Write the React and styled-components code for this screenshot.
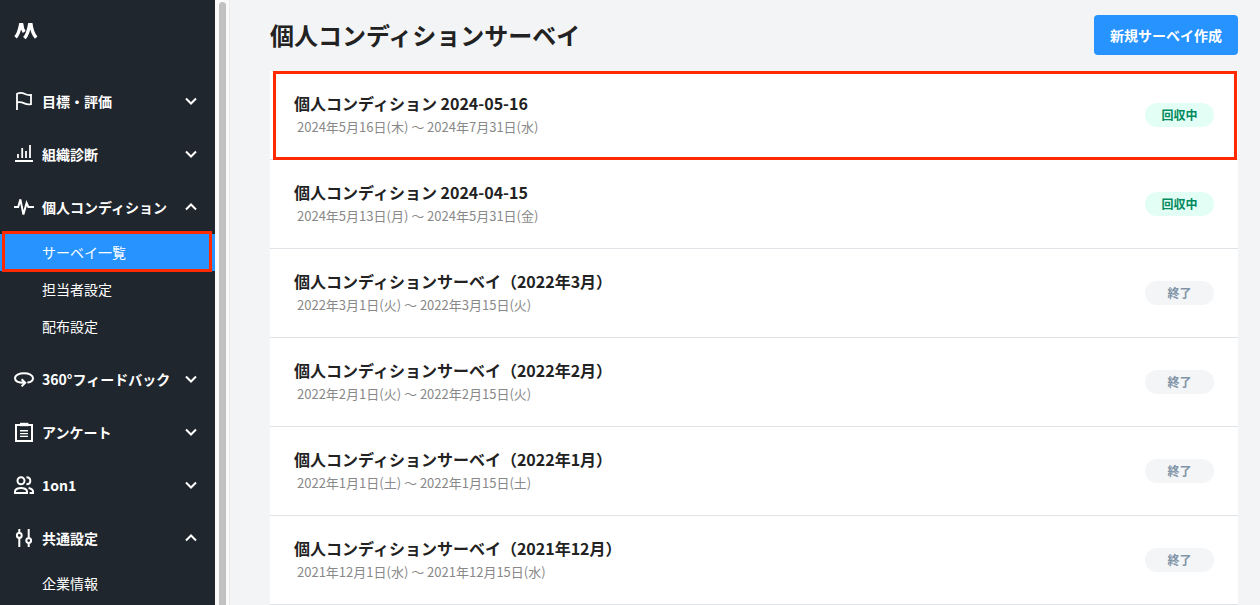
import React, { useState } from 'react';
import styled, { createGlobalStyle, css } from 'styled-components';

const colors = {
  sidebar: '#20262d',
  primary: '#2693ff',
  background: '#f3f4f6',
  border: '#e0e4e8',
  text: '#222222',
  textLight: '#888888',
  highlight: '#ff2a00',
};

const GlobalStyle = createGlobalStyle`
  * {
    box-sizing: border-box;
  }

  body {
    margin: 0;
    background: ${colors.background};
    color: ${colors.text};
    font-family: "Noto Sans CJK JP", "Noto Sans", sans-serif;
  }

  button {
    border: 0;
    font-family: inherit;
    cursor: pointer;
  }
`;

const Layout = styled.div`
  display: flex;
  height: 100vh;
  overflow: hidden;
`;

const Sidebar = styled.aside`
  flex: 0 0 215px;
  background: ${colors.sidebar};
  color: #fff;
  overflow: hidden;
`;

const LogoLink = styled.a`
  display: block;
  height: 75px;
  padding: 22px 14px;
  color: inherit;

  svg {
    display: block;
  }
`;

const Group = styled.div`
  padding-bottom: ${({ $open }) => ($open ? '8px' : '0')};
`;

const GroupButton = styled.button`
  display: flex;
  align-items: center;
  gap: 8px;
  width: 100%;
  height: 53px;
  padding: 0 18px 1px 14px;
  background: none;
  color: inherit;
  font-size: 14px;
  line-height: 20px;
  font-weight: 700;
  text-align: left;
`;

const GroupLabel = styled.span`
  flex: 1;
  white-space: nowrap;
`;

const highlighted = css`
  position: relative;

  &::after {
    content: '';
    position: absolute;
    inset: ${({ $inset }) => $inset};
    border: 3px solid ${colors.highlight};
    pointer-events: none;
    z-index: 1;
  }
`;

const SubLink = styled.a`
  display: block;
  padding-left: 42px;
  font-size: 14px;
  line-height: 37px;
  color: inherit;
  text-decoration: none;
  background: ${({ $active }) => ($active ? colors.primary : 'transparent')};
  ${({ $inset }) => $inset && highlighted}
`;

const ScrollTrack = styled.div`
  flex: 0 0 15px;
  padding: 2px 3px 0 4px;
  background: #fafafa;
  border-right: 1px solid #ebebeb;
`;

const ScrollThumb = styled.div`
  height: 110%;
  border-radius: 4px;
  background: #c1c1c1;
`;

const Main = styled.main`
  flex: 1;
  min-width: 0;
  padding: 15px 22px 0 40px;
`;

const PageHeader = styled.header`
  display: flex;
  justify-content: space-between;
  align-items: center;
  margin-bottom: 16px;
`;

const PageTitle = styled.h1`
  margin: 0;
  font-size: 24px;
  line-height: 40px;
  font-weight: 700;
`;

const CreateButton = styled.button`
  height: 40px;
  padding: 0 16px;
  border-radius: 4px;
  background: ${colors.primary};
  color: #fff;
  font-size: 14px;
  font-weight: 700;
`;

const SurveyList = styled.ul`
  margin: 0;
  padding: 0;
  list-style: none;
  background: #fff;
`;

const SurveyRow = styled.li`
  display: flex;
  justify-content: space-between;
  align-items: center;
  padding: 20px 24px;
  border-bottom: 1px solid ${colors.border};
  ${({ $inset }) => $inset && highlighted}
`;

const SurveyTitle = styled.h2`
  margin: 0;
  font-size: 16px;
  line-height: 24px;
  font-weight: 700;
`;

const SurveyPeriod = styled.p`
  margin: 0;
  padding-left: 3px;
  font-size: 13px;
  line-height: 24px;
  color: ${colors.textLight};
`;

const Badge = styled.span`
  min-width: 69px;
  border-radius: 12px;
  font-size: 12px;
  line-height: 24px;
  font-weight: 700;
  text-align: center;
  background: ${({ $open }) => ($open ? '#e3fff5' : '#f3f5f7')};
  color: ${({ $open }) => ($open ? '#048a5f' : '#8194a7')};
`;

const Icon = ({ children }) => (
  <svg width="20" height="20" viewBox="0 0 20 20" fill="none" stroke="currentColor" strokeWidth="2" aria-hidden="true">
    {children}
  </svg>
);

const Chevron = ({ up }) => (
  <svg width="12" height="12" viewBox="0 0 12 12" fill="none" stroke="currentColor" strokeWidth="2" aria-hidden="true">
    <path d={up ? 'M1 8.5l5-5 5 5' : 'M1 3.5l5 5 5-5'} />
  </svg>
);

const Logo = () => (
  <svg width="24" height="18" viewBox="0 0 24 18" fill="none" stroke="currentColor" strokeWidth="3.4" aria-hidden="true">
    <path d="M1.6 15.4C4.4 12.4 5.4 9 6.8 1.8M7.4 1.2C7.8 4.8 8.4 7.2 10.2 10M10.4 16.2C13.4 13 14.6 9.4 15.8 1.6M16.6 1.2C17.6 7.4 19 12.2 22.2 15.6" />
    <path d="M5.2 1H9l.4 4H5zM14.4 1h3.8l.4 4H14z" fill="currentColor" stroke="none" />
  </svg>
);

const icons = {
  flag: <path d="M3 19V2.8C6 1.4 8 1.6 10.4 2.8S14.6 4.4 17 4v9.2c-2.6.6-4.6.2-6.6-.8S6 10.4 3 11.4" strokeWidth="1.8" />,
  bars: <path d="M1 17h18M4 14v-4M8.2 14V4M12 14V7M16 14V1" strokeWidth="1.8" />,
  pulse: <path d="M0 10h4.2L6.4 2.4l3 15.2L12.6 6l1.8 4H20" />,
  rotate: <path d="M13.4 13.6C17 13 19 11.4 19 9.2 19 6.2 15 4.3 10 4.3S1 6.2 1 9.2c0 2.8 3.6 4.6 9.6 4.6M7.6 10.2l3.6 3.6-3.6 3.6" />,
  clipboard: (
    <>
      <path d="M2 3h16v16H2z" />
      <path d="M6 .8h8.4v3.4H6z" fill="currentColor" stroke="none" />
      <path d="M6 8.8H14M6 11.6H14M6 14.4H14" strokeWidth="1.4" />
    </>
  ),
  users: (
    <>
      <circle cx="7" cy="5.8" r="3.5" />
      <path d="M12.4 2.3c2.6 0 3.9 1.6 3.9 3.5s-1.3 3.5-3.9 3.5" />
      <path d="M1 18v-1.6c0-2.4 3.6-3.5 6-3.5s6 1.1 6 3.5V18zM14.6 12.9c3 .6 4.4 1.8 4.4 3.5V18h-3.4" />
    </>
  ),
  sliders: (
    <>
      <circle cx="5.3" cy="7.4" r="2.4" />
      <circle cx="14.7" cy="12.6" r="2.4" />
      <path d="M5.3 1v4M5.3 9.8V19M14.7 1v9.2M14.7 15v4" />
    </>
  ),
};

const navGroups = [
  { icon: 'flag', label: '目標・評価' },
  { icon: 'bars', label: '組織診断' },
  { icon: 'pulse', label: '個人コンディション', children: ['サーベイ一覧', '担当者設定', '配布設定'] },
  { icon: 'rotate', label: '360°フィードバック' },
  { icon: 'clipboard', label: 'アンケート' },
  { icon: 'users', label: '1on1' },
  { icon: 'sliders', label: '共通設定', children: ['企業情報'] },
];

const surveys = [
  { title: '個人コンディション 2024-05-16', period: '2024年5月16日(木) 〜 2024年7月31日(水)', open: true },
  { title: '個人コンディション 2024-04-15', period: '2024年5月13日(月) 〜 2024年5月31日(金)', open: true },
  { title: '個人コンディションサーベイ（2022年3月）', period: '2022年3月1日(火) 〜 2022年3月15日(火)' },
  { title: '個人コンディションサーベイ（2022年2月）', period: '2022年2月1日(火) 〜 2022年2月15日(火)' },
  { title: '個人コンディションサーベイ（2022年1月）', period: '2022年1月1日(土) 〜 2022年1月15日(土)' },
  { title: '個人コンディションサーベイ（2021年12月）', period: '2021年12月1日(水) 〜 2021年12月15日(水)' },
];

const NavGroup = ({ icon, label, children = [] }) => {
  const [open, setOpen] = useState(children.length > 0);

  return (
    <Group $open={open}>
      <GroupButton type="button" aria-expanded={open} onClick={() => setOpen(!open)}>
        <Icon>{icons[icon]}</Icon>
        <GroupLabel>{label}</GroupLabel>
        <Chevron up={open} />
      </GroupButton>
      {open && children.map((item) => {
        const active = item === 'サーベイ一覧';
        return (
          <SubLink key={item} href="#" $active={active} $inset={active && '-3px 3px -1px 2px'}>
            {item}
          </SubLink>
        );
      })}
    </Group>
  );
};

export default function App() {
  return (
    <>
      <GlobalStyle />
      <Layout>
        <Sidebar>
          <LogoLink href="#" aria-label="ホーム">
            <Logo />
          </LogoLink>
          <nav>
            {navGroups.map((group) => (
              <NavGroup key={group.label} {...group} />
            ))}
          </nav>
        </Sidebar>
        <ScrollTrack>
          <ScrollThumb />
        </ScrollTrack>
        <Main>
          <PageHeader>
            <PageTitle>個人コンディションサーベイ</PageTitle>
            <CreateButton type="button">新規サーベイ作成</CreateButton>
          </PageHeader>
          <SurveyList>
            {surveys.map((survey, index) => (
              <SurveyRow key={survey.title} $inset={index === 0 && '0 1px -1px 3px'}>
                <div>
                  <SurveyTitle>{survey.title}</SurveyTitle>
                  <SurveyPeriod>{survey.period}</SurveyPeriod>
                </div>
                <Badge $open={survey.open}>{survey.open ? '回収中' : '終了'}</Badge>
              </SurveyRow>
            ))}
          </SurveyList>
        </Main>
      </Layout>
    </>
  );
}
